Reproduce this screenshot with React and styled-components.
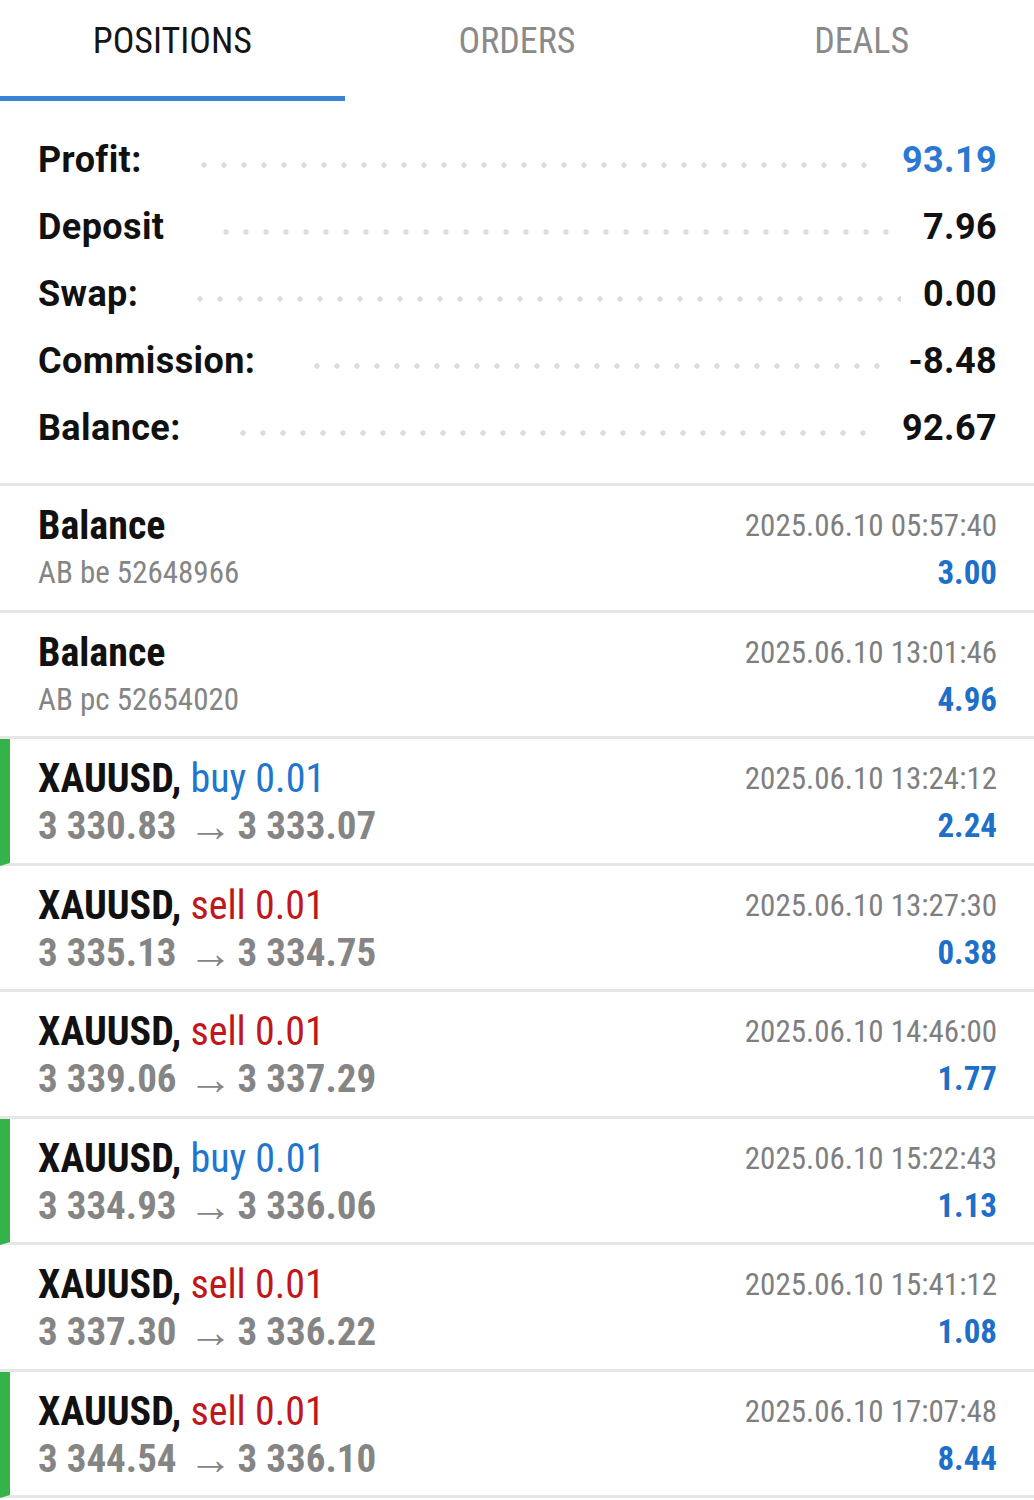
import React from "react";
import styled, { createGlobalStyle } from "styled-components";

const Global = createGlobalStyle`
  html, body { margin: 0; padding: 0; background: #fff; }
  body { font-family: "Roboto", "Liberation Sans", sans-serif; }
`;

const COND = `"Roboto Condensed", "Roboto", "Liberation Sans Narrow", sans-serif`;

const Page = styled.div`
  width: 1034px;
  background: #fff;
`;

const Tabs = styled.div`
  display: grid;
  grid-template-columns: repeat(3, 1fr);
  height: 101px;
`;

const Tab = styled.div`
  display: flex;
  align-items: flex-start;
  justify-content: center;
  padding-top: 18px;
  box-sizing: border-box;
  font-family: ${COND};
  font-stretch: 75%;
  font-size: 36px;
  line-height: 46px;
  color: ${(p) => (p.$active ? "#151515" : "#8a8a8a")};
  border-bottom: 5px solid ${(p) => (p.$active ? "#3c83d6" : "transparent")};
`;

const Summary = styled.div`
  padding: 25px 37px 22px 38px;
  border-bottom: 3px solid #e6e6e6;
`;

const SumRow = styled.div`
  display: flex;
  align-items: center;
  height: 67px;
  font-family: "Roboto", sans-serif;
  font-weight: 700;
  font-size: 36px;
  letter-spacing: 0.4px;
  color: #111;
`;

const Dots = styled.div`
  flex: 1;
  height: 6px;
  margin: 10px 22px 0 52px;
  background-image: radial-gradient(circle, #dcdcdc 2.4px, transparent 3px);
  background-size: 20px 6px;
  background-repeat: repeat-x;
  background-position: left center;
`;

const SumValue = styled.span`
  color: ${(p) => (p.$blue ? "#2a78d2" : "#111")};
`;

const Deal = styled.div`
  display: flex;
  justify-content: space-between;
  box-sizing: border-box;
  height: 126.5px;
  padding: 17px 37px 0 38px;
  border-bottom: 3px solid #e6e6e6;
  border-left: ${(p) => (p.$mark ? "10px solid #35b24a" : "0")};
  padding-left: ${(p) => (p.$mark ? "28px" : "38px")};
  font-family: ${COND};
  font-stretch: 75%;
`;

const Col = styled.div`
  display: flex;
  flex-direction: column;
  align-items: ${(p) => (p.$right ? "flex-end" : "flex-start")};
`;

const Title = styled.div`
  font-size: 40px;
  line-height: 46px;
  font-weight: 700;
  color: #111;
`;

const Side = styled.span`
  font-weight: 400;
  color: ${(p) => (p.$sell ? "#c0171c" : "#2076cc")};
`;

const Sub = styled.div`
  font-size: 31px;
  line-height: 48px;
  color: #858585;
`;

const Prices = styled.div`
  font-size: 39px;
  line-height: 48px;
  font-weight: 700;
  color: #858585;
`;

const Arrow = styled.span`
  font-weight: 400;
  font-size: 44px;
  line-height: 1;
  vertical-align: -2px;
  margin: 0 5px 0 12px;
`;

const DateText = styled.div`
  font-size: 31px;
  line-height: 46px;
  color: #7f7f7f;
`;

const Amount = styled.div`
  font-size: 33px;
  line-height: 48px;
  font-weight: 700;
  color: #1d6fc8;
`;

const summary = [
  { label: "Profit:", value: "93.19", blue: true },
  { label: "Deposit", value: "7.96" },
  { label: "Swap:", value: "0.00" },
  { label: "Commission:", value: "-8.48" },
  { label: "Balance:", value: "92.67" },
];

const deals = [
  { kind: "balance", sub: "AB be 52648966", date: "2025.06.10 05:57:40", amt: "3.00" },
  { kind: "balance", sub: "AB pc 52654020", date: "2025.06.10 13:01:46", amt: "4.96" },
  { kind: "trade", side: "buy", from: "3 330.83", to: "3 333.07", date: "2025.06.10 13:24:12", amt: "2.24", mark: true },
  { kind: "trade", side: "sell", from: "3 335.13", to: "3 334.75", date: "2025.06.10 13:27:30", amt: "0.38" },
  { kind: "trade", side: "sell", from: "3 339.06", to: "3 337.29", date: "2025.06.10 14:46:00", amt: "1.77" },
  { kind: "trade", side: "buy", from: "3 334.93", to: "3 336.06", date: "2025.06.10 15:22:43", amt: "1.13", mark: true },
  { kind: "trade", side: "sell", from: "3 337.30", to: "3 336.22", date: "2025.06.10 15:41:12", amt: "1.08" },
  { kind: "trade", side: "sell", from: "3 344.54", to: "3 336.10", date: "2025.06.10 17:07:48", amt: "8.44", mark: true },
];

export default function App() {
  return (
    <Page>
      <Global />
      <Tabs>
        <Tab $active>POSITIONS</Tab>
        <Tab>ORDERS</Tab>
        <Tab>DEALS</Tab>
      </Tabs>
      <Summary>
        {summary.map((s) => (
          <SumRow key={s.label}>
            <span>{s.label}</span>
            <Dots />
            <SumValue $blue={s.blue}>{s.value}</SumValue>
          </SumRow>
        ))}
      </Summary>
      {deals.map((d, i) => (
        <Deal key={i} $mark={d.mark}>
          <Col>
            {d.kind === "balance" ? (
              <>
                <Title>Balance</Title>
                <Sub>{d.sub}</Sub>
              </>
            ) : (
              <>
                <Title>
                  XAUUSD, <Side $sell={d.side === "sell"}>{d.side} 0.01</Side>
                </Title>
                <Prices>
                  {d.from}
                  <Arrow>→</Arrow>
                  {d.to}
                </Prices>
              </>
            )}
          </Col>
          <Col $right>
            <DateText>{d.date}</DateText>
            <Amount>{d.amt}</Amount>
          </Col>
        </Deal>
      ))}
    </Page>
  );
}
